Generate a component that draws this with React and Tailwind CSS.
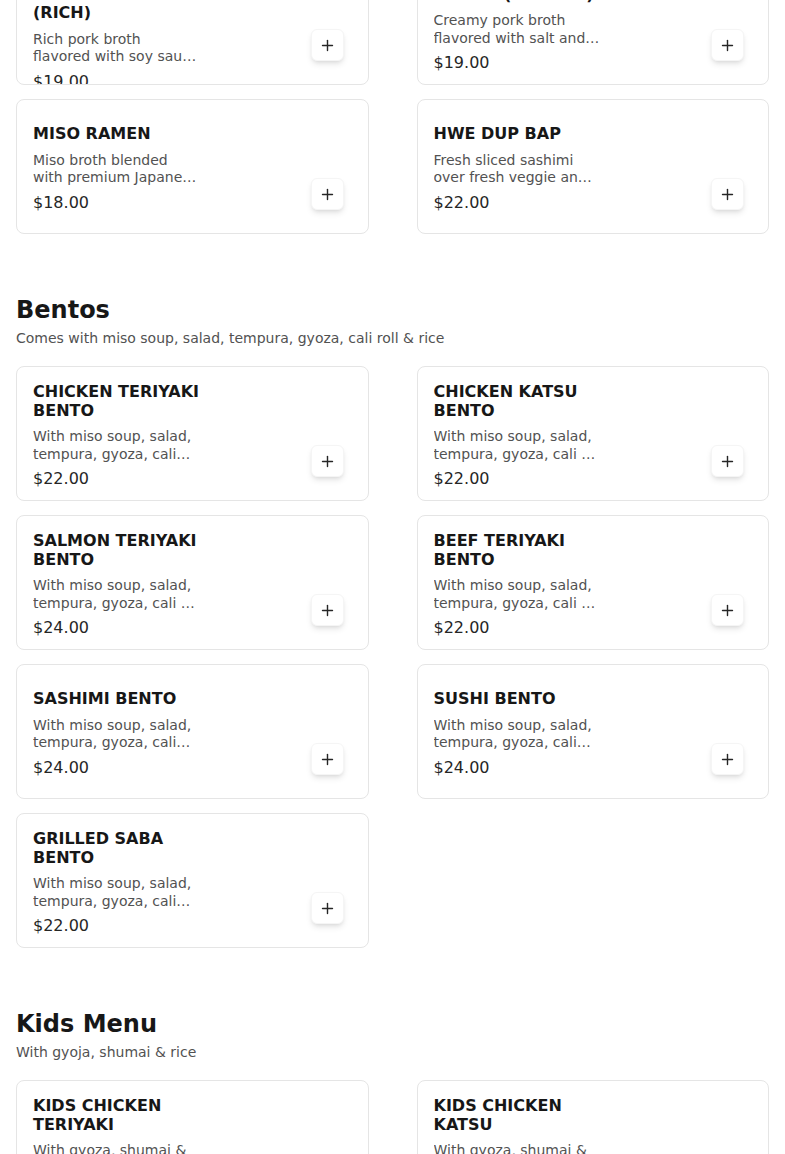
import React from "react";
import { Plus } from "lucide-react";

const sections = [
  {
    id: "ramen",
    items: [
      { name: "Spicy Tonkotsu Shoyu Ramen (Rich)", desc: "Rich pork broth flavored with soy sau…", price: "$19.00" },
      { name: "Tonkotsu Shio Ramen (Creamy)", desc: "Creamy pork broth flavored with salt and…", price: "$19.00" },
      { name: "Miso Ramen", desc: "Miso broth blended with premium Japane…", price: "$18.00" },
      { name: "Hwe Dup Bap", desc: "Fresh sliced sashimi over fresh veggie an…", price: "$22.00" },
    ],
  },
  {
    id: "bentos",
    title: "Bentos",
    subtitle: "Comes with miso soup, salad, tempura, gyoza, cali roll & rice",
    items: [
      { name: "Chicken Teriyaki Bento", desc: "With miso soup, salad, tempura, gyoza, cali…", price: "$22.00" },
      { name: "Chicken Katsu Bento", desc: "With miso soup, salad, tempura, gyoza, cali\u00a0…", price: "$22.00" },
      { name: "Salmon Teriyaki Bento", desc: "With miso soup, salad, tempura, gyoza, cali\u00a0…", price: "$24.00" },
      { name: "Beef Teriyaki Bento", desc: "With miso soup, salad, tempura, gyoza, cali\u00a0…", price: "$22.00" },
      { name: "Sashimi Bento", desc: "With miso soup, salad, tempura, gyoza, cali…", price: "$24.00" },
      { name: "Sushi Bento", desc: "With miso soup, salad, tempura, gyoza, cali…", price: "$24.00" },
      { name: "Grilled Saba Bento", desc: "With miso soup, salad, tempura, gyoza, cali…", price: "$22.00" },
    ],
  },
  {
    id: "kids",
    title: "Kids Menu",
    subtitle: "With gyoja, shumai & rice",
    items: [
      { name: "Kids Chicken Teriyaki", desc: "With gyoza, shumai & rice", price: "$12.00" },
      { name: "Kids Chicken Katsu", desc: "With gyoza, shumai & rice", price: "$12.00" },
    ],
  },
];

const ItemCard = ({ item }) => (
  <div className="flex h-[135px] overflow-hidden rounded-lg border border-neutral-200 bg-white px-4 pb-2 pt-3.5">
    <div className="my-auto min-w-0 flex-1">
      <h3 className="mb-2 text-base font-bold uppercase leading-[1.2] text-neutral-900">
        {item.name}
      </h3>
      <p className="line-clamp-2 text-sm leading-[17.5px] text-neutral-600">{item.desc}</p>
      <p className="mt-1 text-base leading-6 text-neutral-800">{item.price}</p>
    </div>
    <div className="flex w-[150px] shrink-0 items-end justify-end pb-[15px] pr-2">
      <button className="flex h-8 w-[33px] items-center justify-center rounded-md border border-neutral-100 bg-white text-neutral-800 shadow-md">
        <Plus size={17} strokeWidth={2} />
      </button>
    </div>
  </div>
);

export default function App() {
  return (
    <div className="min-h-screen overflow-hidden bg-white px-4 font-['DejaVu_Sans',sans-serif]">
      <div className="-mt-[50px] pb-10">
        {sections.map((s, i) => (
          <section key={s.id} className={i === 0 ? "" : "mt-15"}>
            {s.title && (
              <>
                <h2 className="text-2xl font-bold leading-8 text-neutral-900">{s.title}</h2>
                <p className="mt-0.5 text-sm leading-5 text-neutral-600">{s.subtitle}</p>
              </>
            )}
            <div className={`grid grid-cols-2 gap-x-12 gap-y-3.5 ${s.title ? "mt-[18px]" : ""}`}>
              {s.items.map((it) => (
                <ItemCard key={it.name} item={it} />
              ))}
            </div>
          </section>
        ))}
      </div>
    </div>
  );
}
